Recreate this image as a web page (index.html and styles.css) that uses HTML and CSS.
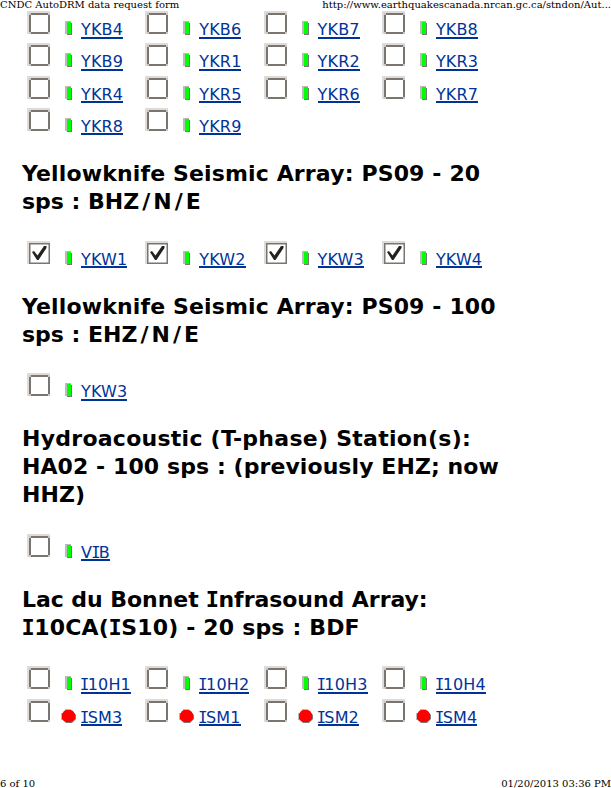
FILE: index.html
```
<!DOCTYPE html>
<html lang="en">
<head>
<meta charset="utf-8">
<title>CNDC AutoDRM data request form</title>
<link rel="stylesheet" href="styles.css">
</head>
<body>
<svg class="defs" width="0" height="0" aria-hidden="true">
  <symbol id="box" viewBox="0 0 23 23"><path fill="#dedbd8" d="M0 0h23v2H2v21H0z"/><path fill="#7b7570" d="M2 2h21v21H2z"/><path fill="#fff" d="M4 4h17v17H4z"/><path fill="#c9c6c3" d="M2 2h2v2H2zM21 2h2v2h-2zM2 21h2v2H2zM21 21h2v2h-2z"/></symbol>
  <symbol id="checked" viewBox="0 0 23 23"><path fill="#dedbd8" d="M0 0h23v2H2v21H0z"/><path fill="#7b7570" d="M2 2h21v21H2z"/><path fill="#fff" d="M3.500 3.500h18v18h-18z"/><path fill="#222" d="M5 11l2-1 3.500 4.500L17 5h2.500v2l-8 12H10z"/></symbol>
  <symbol id="up" viewBox="0 0 15 15"><path fill="#bbb" d="M4 0h6v13H4z"/><path fill="#777" d="M6 2h5v12H6z"/><path fill="#0f0" d="M6 1h4v12H6z"/></symbol>
  <symbol id="down" viewBox="0 0 15 15"><path fill="#bbb" d="M4 0h6v2H4zM0 4h2v7H0z"/><path fill="#777" d="M5 2h6l4 4v4l-4 4H5l-3-3V5z"/><path fill="#f00" d="M5 1h5l2 1 2 3v5l-2 2-2 1H5l-2-1-2-2V5l2-3z"/></symbol>
</svg>
<header class="page-line"><span class="title">CNDC AutoDRM data request form</span><span class="url">http://www.earthquakescanada.nrcan.gc.ca/stndon/Aut...</span></header>
<main id="stations"></main>
<footer class="page-line"><span class="page">6 of 10</span><span class="date">01/20/2013 03:36 PM</span></footer>
<script src="script.js"></script>
</body>
</html>
```
FILE: styles.css
```
body {
  margin: 0;
  width: 611px;
  height: 788px;
  overflow: hidden;
  display: flex;
  flex-direction: column;
  background: #fff;
  color: #000;
  font-family: "DejaVu Sans", sans-serif;
}
.defs { position: absolute; }
.page-line {
  display: flex;
  justify-content: space-between;
  height: 11px;
  line-height: 10px;
  font-family: "DejaVu Serif", serif;
  font-size: 10px;
  white-space: nowrap;
}
footer.page-line { height: 9px; margin-top: auto; }
h2 {
  margin: 19.6px 0 24.7px 22px;
  font-size: 22px;
  line-height: 28px;
  white-space: nowrap;
}
h2 .line { display: block; }
.grid {
  display: grid;
  grid-template-columns: repeat(4, 118.3px);
  grid-auto-rows: 32.33px;
  margin-left: 27px;
}
.station { display: flex; align-items: flex-start; }
.check { width: 23px; height: 23px; flex: none; }
.status { width: 15px; height: 15px; flex: none; margin: 10px 0 0 11px; }
.station a {
  margin: 9px 0 0 5px;
  height: 16.500px;
  line-height: 19px;
  border-bottom: 2px solid #039;
  color: #039;
  font-size: 16px;
  letter-spacing: .15px;
  text-decoration: none;
}
.i { font-family: "DejaVu Sans Mono", monospace; margin-left: -1.2px; letter-spacing: -1.700px; }
h2 .i { margin-left: -.5px; letter-spacing: -.5px; }
.slash { margin: 0 3px; }
```
FILE: script.js
```
const sections = [
  [[], ["YKB4","YKB6","YKB7","YKB8","YKB9","YKR1","YKR2","YKR3","YKR4","YKR5","YKR6","YKR7","YKR8","YKR9"]],
  [[["Yellowknife Seismic Array: PS09 - 20", .14],["sps : BHZ/N/E", 0]], ["YKW1","YKW2","YKW3","YKW4"], true],
  [[["Yellowknife Seismic Array: PS09 - 100", .14],["sps : EHZ/N/E", 0]], ["YKW3"]],
  [[["Hydroacoustic (T-phase) Station(s):", .26],["HA02 - 100 sps : (previously EHZ; now", .08],["HHZ)", .1]], ["VIB"]],
  [[["Lac du Bonnet Infrasound Array:", -.05],["I10CA(IS10) - 20 sps : BDF", .17]], ["I10H1","I10H2","I10H3","I10H4","ISM3","ISM1","ISM2","ISM4"]]
];
const glyphs = text => text.replace(/[I/]/g, c => `<span class="${c === "I" ? "i" : "slash"}">${c}</span>`);
const icon = (cls, id) => `<svg class="${cls}"><use href="#${id}"/></svg>`;
document.getElementById("stations").innerHTML = sections.map(([lines, names, checked]) =>
  `<section>${lines.length ? `<h2>${lines.map(([l, gap]) => `<span class="line" style="letter-spacing:${gap}px">${glyphs(l)}</span>`).join("")}</h2>` : ""}
  <div class="grid">${names.map(n => `<div class="station">${icon("check", checked ? "checked" : "box")}${icon("status", n.startsWith("ISM") ? "down" : "up")}<a href="#">${glyphs(n)}</a></div>`).join("")}</div></section>`
).join("");
```
